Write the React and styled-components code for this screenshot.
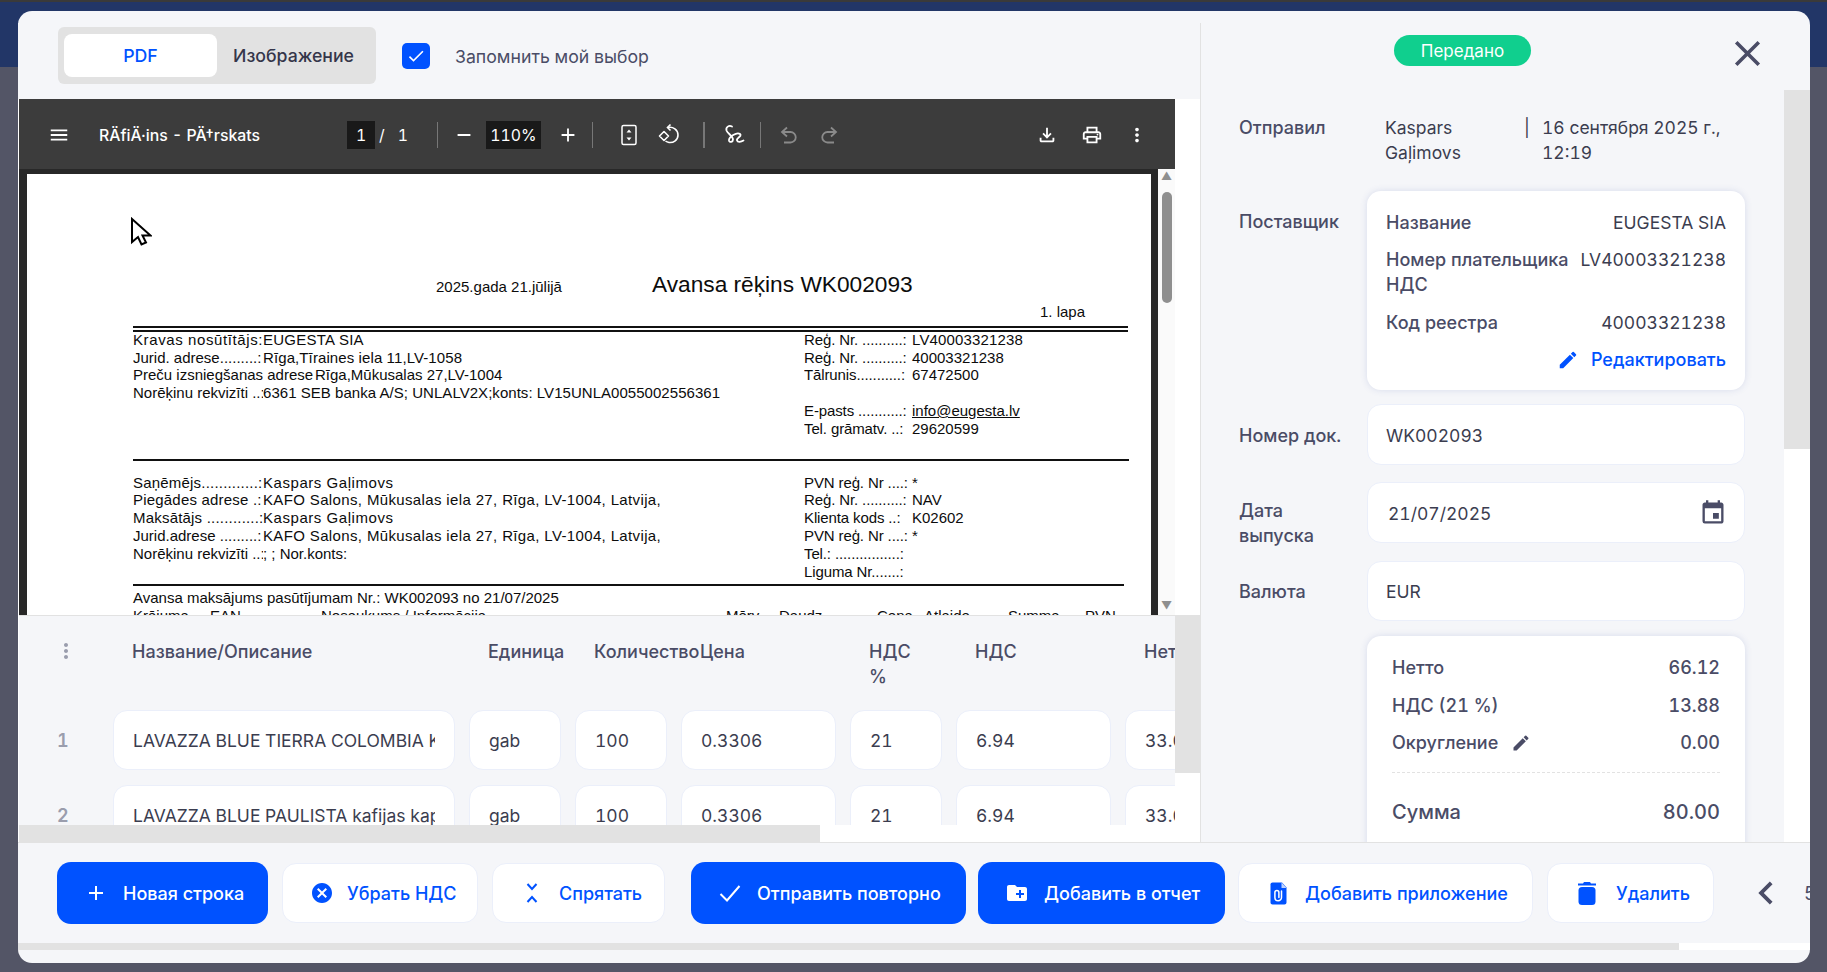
import React from "react";
import styled, { createGlobalStyle } from "styled-components";
import {
  MdAdd,
  MdCancel,
  MdChevronLeft,
  MdClose,
  MdCreateNewFolder,
  MdEdit,
  MdEvent,
  MdMenu,
  MdMoreVert,
  MdOutlineFileDownload,
  MdOutlinePrint,
  MdRemove,
  MdCheck,
} from "react-icons/md";

const blue = "#0052ff";
const ink = "#4a4c66";
const text = "#3b3d4f";
const panel = "#f5f6f9";
const bar = "#e2e2e2";
const font = `"Inter", "Noto Sans", sans-serif`;

const GlobalStyle = createGlobalStyle`
  html, body { margin: 0; padding: 0; background: #535566; }
  * { box-sizing: border-box; }
`;

const FitIcon = () => (
  <svg width="24" height="24" viewBox="0 0 24 24" fill="none">
    <rect x="5" y="2.500" width="14" height="19" rx="1.500" stroke="#fff" strokeWidth="1.500" />
    <path d="M12 6.500l2.500 3h-5zM12 17.500l-2.500-3h5z" fill="#fff" />
  </svg>
);

const RotateIcon = () => (
  <svg width="24" height="24" viewBox="0 0 24 24" fill="none" stroke="#fff" strokeWidth="1.600">
    <path d="M7 8.500l4.500 4.500L7 17.500 2.500 13z" strokeLinejoin="round" />
    <path d="M11 4.500c5-1 10 2 10 7.500 0 5-4.500 8-9 7.500-1.400-.2-2.500-.7-3.500-1.500" />
    <path d="M13.500 1.500L10.500 4.500l3 3" />
  </svg>
);

const InkIcon = () => (
  <svg width="24" height="24" viewBox="0 0 24 24" fill="none" stroke="#fff" strokeWidth="1.800" strokeLinecap="round">
    <path d="M11 3.500C8 2 4.500 4 5.500 7.500c1 3 6.500 5.500 6.500 9 0 2.500-3.500 3.500-4 1-.5-3.500 8-9 11-6.500 2.500 2.500-4 3.500-3 6.500.7 2 4 1.500 6.500 0" />
  </svg>
);

const UndoIcon = ({ flip }) => (
  <svg width="24" height="24" viewBox="0 0 24 24" fill="none" stroke="#8a8a8a" strokeWidth="1.800" style={flip ? { transform: "scaleX(-1)" } : undefined}>
    <path d="M10 4.500L5 9l5 4.500" />
    <path d="M5.500 9h8a5 5 0 0 1 0 10.500H7" />
  </svg>
);

const AttachIcon = () => (
  <svg width="24" height="24" viewBox="0 0 24 24">
    <path d="M4.500 3.500c0-1.100.9-2 2-2h9.500l4.500 5v15c0 1.100-.9 2-2 2h-12c-1.100 0-2-.9-2-2z" fill={blue} />
    <path d="M15.500 1.500l5 5.500h-5z" fill="#fff" opacity=".75" />
    <path d="M15.500 10v6.500a3.300 3.300 0 0 1-6.600 0v-5a2 2 0 0 1 4 0v5" fill="none" stroke="#fff" strokeWidth="1.500" strokeLinecap="round" />
  </svg>
);

const TrashIcon = () => (
  <svg width="24" height="24" viewBox="0 0 24 24" fill={blue}>
    <path d="M3 2.500h5l1-1.500h6l1 1.500h5v2H3z" />
    <rect x="3.500" y="6" width="17" height="18" rx="3.500" />
  </svg>
);

const CheckIcon = () => (
  <svg width="24" height="24" viewBox="0 0 24 24" fill="none" stroke="#fff" strokeWidth="2">
    <path d="M2.500 13l6.500 6.500L21.500 5" />
  </svg>
);

const CursorIcon = () => (
  <svg width="22" height="30" viewBox="0 0 22 30">
    <path
      d="M2 2v23l6-5 3.500 7.500 4.500-2-3.500-7h8z"
      fill="#fff"
      stroke="#000"
      strokeWidth="2"
    />
  </svg>
);

const Backdrop = styled.div`
  position: relative;
  width: 1827px;
  height: 972px;
  overflow: hidden;
  background: #535566;
  font-family: ${font};
  font-variant-numeric: tabular-nums;
`;

const AppHeader = styled.div`
  height: 67px;
  background: #223667;
  border-top: 2px solid #3a3a3a;
`;

const Modal = styled.div`
  position: absolute;
  left: 18px;
  top: 11px;
  width: 1792px;
  height: 952px;
  display: flex;
  flex-direction: column;
  background: ${panel};
  border-radius: 14px;
  overflow: hidden;
`;

const Main = styled.div`
  height: 831px;
  display: flex;
`;

const LeftPane = styled.div`
  width: 1183px;
  margin-top: 12px;
  padding-left: 1px;
  display: flex;
  flex-direction: column;
  background: #fff;
  border-right: 1px solid ${bar};
`;

const ChoiceRow = styled.div`
  height: 76px;
  margin-left: -1px;
  padding: 4px 0 0 40px;
  display: flex;
  align-items: flex-start;
  background: ${panel};
`;

const Toggle = styled.div`
  width: 318px;
  height: 57px;
  padding: 7px 6px;
  display: flex;
  background: ${bar};
  border-radius: 6px;
`;

const ToggleItem = styled.div`
  width: ${(p) => (p.$active ? "153px" : "auto")};
  padding-left: ${(p) => (p.$active ? "0" : "16px")};
  display: flex;
  align-items: center;
  justify-content: ${(p) => (p.$active ? "center" : "flex-start")};
  background: ${(p) => (p.$active ? "#fff" : "transparent")};
  color: ${(p) => (p.$active ? blue : "#35364a")};
  border-radius: 8px;
  font-size: 17.700px;
  font-weight: 500;
`;

const Remember = styled.label`
  height: 57px;
  margin-left: 26px;
  padding-top: 2px;
  display: flex;
  align-items: center;
  gap: 25px;
  color: ${ink};
  font-size: 17.700px;
`;

const CheckBox = styled.span`
  width: 28px;
  height: 26px;
  margin-top: -2px;
  display: flex;
  align-items: center;
  justify-content: center;
  background: ${blue};
  border-radius: 5px;
  color: #fff;
  font-size: 20px;
`;

const Viewer = styled.div`
  width: 1156px;
  height: 516px;
  flex: none;
  display: flex;
  flex-direction: column;
  background: #282828;
`;

const PdfBar = styled.div`
  height: 70px;
  flex: none;
  padding-top: 2px;
  display: flex;
  align-items: center;
  background: #3c3c3c;
  color: #fff;
  font-size: 15.800px;
  font-weight: 500;
`;

const Tool = styled.span`
  width: 24px;
  height: 24px;
  flex: none;
  margin-left: ${(p) => p.$ml}px;
  display: flex;
  align-items: center;
  justify-content: center;
  color: #fff;
  font-size: 22px;
`;

const DocTitle = styled.span`
  width: 200px;
  margin-left: 28px;
  white-space: nowrap;
`;

const NumBox = styled.span`
  width: ${(p) => p.$w}px;
  height: 28px;
  flex: none;
  margin-left: ${(p) => p.$ml}px;
  display: flex;
  align-items: center;
  justify-content: center;
  background: #191919;
  font-weight: 400;
`;

const PageTotal = styled.span`
  margin-left: ${(p) => p.$ml}px;
  font-weight: 400;
`;

const BarSep = styled.span`
  width: ${(p) => (p.$thick ? 2 : 1)}px;
  height: 26px;
  flex: none;
  margin-left: ${(p) => p.$ml}px;
  background: #777;
`;

const PdfBody = styled.div`
  height: 446px;
  padding: 5px 0 0 8px;
  display: flex;
  overflow: hidden;
`;

const Sheet = styled.div`
  position: relative;
  width: 1124px;
  height: 500px;
  flex: none;
  padding: 98px 0 0 106px;
  background: #fff;
  color: #0c0c0c;
  font-family: "Liberation Sans", Arial, sans-serif;
  font-size: 15px;
  line-height: 17.800px;
`;

const SheetScroll = styled.div`
  width: 17px;
  height: 446px;
  flex: none;
  margin-top: -5px;
  margin-left: 7px;
  display: flex;
  flex-direction: column;
  align-items: center;
  background: #fafafa;
  color: #8f8f8f;
  font-size: 11px;
  line-height: 14px;
`;

const ScrollThumb = styled.div`
  width: 10px;
  height: 111px;
  margin-top: 9px;
  background: #8f8f8f;
  border-radius: 5px;
`;

const ScrollArrowDown = styled.div`
  margin-top: auto;
  padding-bottom: 3px;
`;

const Cursor = styled.span`
  position: absolute;
  left: 103px;
  top: 43px;
  line-height: 0;
`;

const TitleRow = styled.div`
  height: 24px;
  display: flex;
  align-items: baseline;
`;

const SheetDate = styled.span`
  width: 519px;
  padding-left: 303px;
  white-space: nowrap;
`;

const SheetTitle = styled.span`
  font-size: 22.700px;
  line-height: 24px;
  white-space: nowrap;
`;

const PageNo = styled.div`
  margin: 7px 0 0 907px;
`;

const DoubleRule = styled.div`
  width: 995px;
  height: 6px;
  margin-top: 5px;
  border-top: 2px solid #111;
  border-bottom: 2px solid #111;
`;

const Rule = styled.div`
  width: ${(p) => p.$w}px;
  height: 2px;
  margin-top: ${(p) => p.$mt}px;
  background: #111;
`;

const Columns = styled.div`
  margin-top: ${(p) => p.$mt}px;
  display: grid;
  grid-template-columns: 671px auto;
`;

const Line = styled.div`
  height: 17.800px;
  display: flex;
  white-space: nowrap;
`;

const LineLabel = styled.span`
  width: ${(p) => p.$w}px;
  flex: none;
  overflow: hidden;
  letter-spacing: ${(p) => p.$ls || 0}px;
`;

const LineValue = styled.span`
  letter-spacing: ${(p) => p.$ls || 0}px;
`;

const Mail = styled.span`
  text-decoration: underline;
`;

const OrderLine = styled.div`
  height: 17.800px;
  margin-top: 3px;
  white-space: nowrap;
`;

const SheetHead = styled.div`
  height: 17.800px;
  display: grid;
  grid-template-columns: 77px 111px 405px 53px 98px 47px 84px 77px auto;
  white-space: nowrap;
`;

const TableZone = styled.div`
  height: 227px;
  flex: none;
  display: flex;
  border-top: 1px solid ${bar};
`;

const TableCol = styled.div`
  width: 1156px;
  display: flex;
  flex-direction: column;
`;

const TableScroll = styled.div`
  height: 209px;
  padding-top: 23px;
  overflow: hidden;
  background: ${panel};
`;

const Grid = styled.div`
  width: 1300px;
  margin-bottom: ${(p) => p.$mb}px;
  display: grid;
  grid-template-columns: 80px 342px 92px 92px 155px 92px 155px 155px;
  column-gap: 14px;
`;

const HeadCell = styled.div`
  padding-left: 19px;
  color: ${ink};
  font-size: 18px;
  font-weight: 500;
  line-height: 25px;
  white-space: nowrap;
`;

const Dots = styled.div`
  padding-left: 35px;
  color: #9a9dad;
  font-size: 24px;
  line-height: 25px;
`;

const RowNo = styled.div`
  padding-left: 38px;
  align-self: center;
  color: #9a9dad;
  font-size: 18px;
  font-weight: 600;
`;

const Cell = styled.div`
  height: 60px;
  padding: 0 19px;
  display: flex;
  align-items: center;
  background: #fff;
  border: 1px solid #ebeffa;
  border-radius: 14px;
  color: ${text};
  font-size: 17.500px;
`;

const CellText = styled.span`
  overflow: hidden;
  white-space: nowrap;
`;

const HBar = styled.div`
  height: 17px;
  background: #fff;
`;

const HThumb = styled.div`
  width: ${(p) => p.$w}px;
  height: 100%;
  background: ${bar};
`;

const VBar = styled.div`
  width: 25px;
  background: #fff;
`;

const VThumb = styled.div`
  height: ${(p) => p.$h}px;
  background: ${bar};
`;

const RightPane = styled.div`
  width: 609px;
  display: flex;
  flex-direction: column;
`;

const StatusRow = styled.div`
  height: 79px;
  flex: none;
  padding: 24px 41px 0 193px;
  display: flex;
  align-items: flex-start;
  justify-content: space-between;
`;

const Badge = styled.span`
  width: 137px;
  height: 31px;
  display: flex;
  align-items: center;
  justify-content: center;
  background: #10cf8e;
  border-radius: 16px;
  color: #fff;
  font-size: 17px;
`;

const CloseBtn = styled.span`
  margin-top: -3px;
  color: ${ink};
  font-size: 43px;
  line-height: 0;
  & svg {
    display: block;
  }
`;

const RightBody = styled.div`
  height: 752px;
  display: flex;
  overflow: hidden;
`;

const Details = styled.div`
  width: 583px;
  padding: 25px 39px 0 38px;
  background: ${panel};
`;

const Row = styled.div`
  margin-top: ${(p) => p.$mt || 0}px;
  display: grid;
  grid-template-columns: 128px 378px;
  align-items: ${(p) => (p.$top ? "start" : "center")};
`;

const RowLabel = styled.div`
  padding-top: ${(p) => p.$pt || 0}px;
  margin-bottom: ${(p) => p.$mb || 0}px;
  color: ${ink};
  font-size: 18px;
  font-weight: 500;
  line-height: 25px;
`;

const Sender = styled.div`
  padding-left: 18px;
  display: grid;
  grid-template-columns: 139px 18px auto;
  color: ${text};
  font-size: 17.500px;
  line-height: 25px;
`;

const Card = styled.div`
  padding: ${(p) => p.$pad};
  background: #fff;
  border-radius: 14px;
  box-shadow: 0 0 7px rgba(70, 90, 170, 0.16);
`;

const CardRow = styled.div`
  margin-top: ${(p) => p.$mt || 0}px;
  display: flex;
  justify-content: space-between;
  align-items: flex-start;
  color: ${text};
  font-size: 17.500px;
  line-height: 25px;
`;

const CardKey = styled.span`
  max-width: 190px;
  color: ${ink};
  font-size: 18px;
  font-weight: 500;
`;

const EditLink = styled.div`
  margin-top: 12px;
  display: flex;
  justify-content: flex-end;
  align-items: center;
  gap: 12px;
  color: ${blue};
  font-size: 18px;
  font-weight: 500;
  line-height: 25px;
`;

const Field = styled.div`
  height: ${(p) => p.$h}px;
  padding: 1px ${(p) => p.$pl || 18}px 0;
  display: flex;
  align-items: center;
  justify-content: space-between;
  background: #fff;
  border: 1px solid #ebeffa;
  border-radius: 14px;
  color: ${text};
  font-size: 17.500px;
`;

const CalendarIcon = styled.span`
  margin-right: -3px;
  color: ${ink};
  font-size: 28px;
  line-height: 0;
`;

const TotalRow = styled.div`
  height: ${(p) => p.$h || 38}px;
  display: flex;
  align-items: center;
  justify-content: space-between;
  color: ${ink};
  font-size: 18px;
  font-weight: 500;
`;

const TotalKey = styled.span`
  display: flex;
  align-items: center;
  gap: 13px;
`;

const Dashed = styled.div`
  margin-top: 11px;
  border-top: 1px dashed ${bar};
`;

const SumRow = styled.div`
  height: 30px;
  margin-top: 24px;
  margin-bottom: 70px;
  display: flex;
  align-items: center;
  justify-content: space-between;
  color: ${ink};
  font-size: 20px;
  font-weight: 500;
`;

const RightTrack = styled.div`
  width: 26px;
  background: #fff;
`;

const Footer = styled.div`
  height: 121px;
  border-top: 1px solid ${bar};
  overflow: hidden;
`;

const Buttons = styled.div`
  height: 62px;
  margin-top: 19px;
  padding-left: 39px;
  display: flex;
  align-items: center;
  white-space: nowrap;
`;

const Btn = styled.button`
  width: ${(p) => p.$w}px;
  height: ${(p) => (p.$primary ? 62 : 60)}px;
  flex: none;
  margin-left: ${(p) => p.$ml || 0}px;
  padding: 0 0 0 27px;
  display: flex;
  align-items: center;
  gap: ${(p) => p.$gap || 15}px;
  background: ${(p) => (p.$primary ? blue : "#fff")};
  border: ${(p) => (p.$primary ? "none" : "1px solid #ebeffa")};
  border-radius: 14px;
  color: ${(p) => (p.$primary ? "#fff" : blue)};
  font-family: ${font};
  font-size: 18px;
  font-weight: 500;
`;

const BtnIcon = styled.span`
  width: 24px;
  height: 24px;
  flex: none;
  display: flex;
  align-items: center;
  justify-content: center;
  font-size: ${(p) => p.$size || 24}px;
`;

const Pager = styled.span`
  margin-left: 29px;
  display: flex;
  align-items: center;
  color: ${ink};
  font-size: 46px;
`;

const PagerNo = styled.span`
  margin-left: 15px;
  color: ${ink};
  font-size: 18px;
`;

const FooterBar = styled.div`
  height: 7px;
  margin-top: 19px;
  background: #fff;
`;

const leftTop = [
  ["Kravas nosūtītājs:", "EUGESTA SIA", 130, 0.6, 0.25],
  ["Jurid. adrese.........:", "Rīga,Tīraines iela 11,LV-1058", 130, 0, 0.1],
  ["Preču izsniegšanas adrese", "Rīga,Mūkusalas 27,LV-1004", 182],
  ["Norēķinu rekvizīti ..:", "6361 SEB banka A/S; UNLALV2X;konts: LV15UNLA0055002556361", 130, 0, 0.04],
];

const rightTop = [
  ["Reģ. Nr. ..........:", "LV40003321238", 108, -0.12, 0.15],
  ["Reģ. Nr. ..........:", "40003321238", 108, -0.12],
  ["Tālrunis...........:", "67472500", 108, -0.12],
  ["", "", 108],
  ["E-pasts ...........:", <Mail key="m">info@eugesta.lv</Mail>, 108, -0.12],
  ["Tel. grāmatv. ..:", "29620599", 108, -0.12],
];

const leftBottom = [
  ["Saņēmējs.............:", "Kaspars Gaļimovs", 130, 0.2, 0.55],
  ["Piegādes adrese .:", "KAFO Salons, Mūkusalas iela 27, Rīga, LV-1004, Latvija,", 130, 0.2, 0.36],
  ["Maksātājs ............:", "Kaspars Gaļimovs", 130, 0.2, 0.55],
  ["Jurid.adrese .........:", "KAFO Salons, Mūkusalas iela 27, Rīga, LV-1004, Latvija,", 130, 0, 0.36],
  ["Norēķinu rekvizīti ..:", "; ; Nor.konts:", 130],
];

const rightBottom = [
  ["PVN reģ. Nr ....:", "*", 108, -0.12],
  ["Reģ. Nr. ..........:", "NAV", 108, -0.12],
  ["Klienta kods ..:", "K02602", 108, -0.12],
  ["PVN reģ. Nr ....:", "*", 108, -0.12],
  ["Tel.: ................:", "", 108, -0.12],
  ["Liguma Nr.......:", "", 108, -0.12],
];

const rows = [
  ["1", "LAVAZZA BLUE TIERRA COLOMBIA KAFIJAS KAPSULAS"],
  ["2", "LAVAZZA BLUE PAULISTA kafijas kapsulas"],
];

const Lines = ({ items }) => (
  <div>
    {items.map(([label, value, width, labelSpacing, valueSpacing], i) => (
      <Line key={i}>
        <LineLabel $w={width} $ls={labelSpacing}>{label}</LineLabel>
        <LineValue $ls={valueSpacing}>{value}</LineValue>
      </Line>
    ))}
  </div>
);

const App = () => {
  return (
    <>
      <GlobalStyle />
      <Backdrop>
        <AppHeader />
        <Modal>
          <Main>
            <LeftPane>
              <ChoiceRow>
                <Toggle>
                  <ToggleItem $active>PDF</ToggleItem>
                  <ToggleItem>Изображение</ToggleItem>
                </Toggle>
                <Remember>
                  <CheckBox>
                    <MdCheck />
                  </CheckBox>
                  Запомнить мой выбор
                </Remember>
              </ChoiceRow>
              <Viewer>
                <PdfBar>
                  <Tool $ml={28}><MdMenu /></Tool>
                  <DocTitle>RÄfiÄ·ins - PÄ†rskats</DocTitle>
                  <NumBox $w={28} $ml={48}>1</NumBox>
                  <PageTotal $ml={4}>/</PageTotal>
                  <PageTotal $ml={13}>1</PageTotal>
                  <BarSep $ml={29} />
                  <Tool $ml={14}><MdRemove /></Tool>
                  <NumBox $w={55} $ml={10}>110%</NumBox>
                  <Tool $ml={15}><MdAdd /></Tool>
                  <BarSep $ml={12} />
                  <Tool $ml={24}><FitIcon /></Tool>
                  <Tool $ml={16}><RotateIcon /></Tool>
                  <BarSep $thick $ml={22} />
                  <Tool $ml={16}><InkIcon /></Tool>
                  <BarSep $ml={15} />
                  <Tool $ml={16}><UndoIcon /></Tool>
                  <Tool $ml={16}><UndoIcon flip /></Tool>
                  <Tool $ml={194}><MdOutlineFileDownload /></Tool>
                  <Tool $ml={21}><MdOutlinePrint /></Tool>
                  <Tool $ml={21}><MdMoreVert /></Tool>
                </PdfBar>
                <PdfBody>
                  <Sheet>
                    <Cursor><CursorIcon /></Cursor>
                    <TitleRow>
                      <SheetDate>2025.gada 21.jūlijā</SheetDate>
                      <SheetTitle>Avansa rēķins WK002093</SheetTitle>
                    </TitleRow>
                    <PageNo>1. lapa</PageNo>
                    <DoubleRule />
                    <Columns $mt={-1}>
                      <Lines items={leftTop} />
                      <Lines items={rightTop} />
                    </Columns>
                    <Rule $w={996} $mt={21} />
                    <Columns $mt={13}>
                      <Lines items={leftBottom} />
                      <Lines items={rightBottom} />
                    </Columns>
                    <Rule $w={991} $mt={4} />
                    <OrderLine>Avansa maksājums pasūtījumam Nr.: WK002093 no 21/07/2025</OrderLine>
                    <SheetHead>
                      <span>Krājuma-</span>
                      <span>EAN</span>
                      <span>Nosaukums / Informācija</span>
                      <span>Mērv.</span>
                      <span>Daudz.</span>
                      <span>Cena</span>
                      <span>Atlaide</span>
                      <span>Summa</span>
                      <span>PVN</span>
                    </SheetHead>
                  </Sheet>
                  <SheetScroll>
                    <span>▲</span>
                    <ScrollThumb />
                    <ScrollArrowDown>▼</ScrollArrowDown>
                  </SheetScroll>
                </PdfBody>
              </Viewer>
              <TableZone>
                <TableCol>
                  <TableScroll>
                    <Grid $mb={21}>
                      <Dots><MdMoreVert /></Dots>
                      <HeadCell>Название/Описание</HeadCell>
                      <HeadCell>Единица</HeadCell>
                      <HeadCell>Количество</HeadCell>
                      <HeadCell>Цена</HeadCell>
                      <HeadCell>НДС<br />%</HeadCell>
                      <HeadCell>НДС</HeadCell>
                      <HeadCell>Нетто</HeadCell>
                    </Grid>
                    {rows.map(([no, name]) => (
                      <Grid key={no} $mb={15}>
                        <RowNo>{no}</RowNo>
                        <Cell><CellText>{name}</CellText></Cell>
                        <Cell><CellText>gab</CellText></Cell>
                        <Cell><CellText>100</CellText></Cell>
                        <Cell><CellText>0.3306</CellText></Cell>
                        <Cell><CellText>21</CellText></Cell>
                        <Cell><CellText>6.94</CellText></Cell>
                        <Cell><CellText>33.06</CellText></Cell>
                      </Grid>
                    ))}
                  </TableScroll>
                  <HBar><HThumb $w={801} /></HBar>
                </TableCol>
                <VBar><VThumb $h={157} /></VBar>
              </TableZone>
            </LeftPane>
            <RightPane>
              <StatusRow>
                <Badge>Передано</Badge>
                <CloseBtn><MdClose /></CloseBtn>
              </StatusRow>
              <RightBody>
                <Details>
                  <Row $top>
                    <RowLabel>Отправил</RowLabel>
                    <Sender>
                      <span>Kaspars Gaļimovs</span>
                      <span>|</span>
                      <span>16 сентября 2025 г., 12:19</span>
                    </Sender>
                  </Row>
                  <Row $top $mt={26}>
                    <RowLabel $pt={18}>Поставщик</RowLabel>
                    <Card $pad="19px 19px 18px">
                      <CardRow>
                        <CardKey>Название</CardKey>
                        EUGESTA SIA
                      </CardRow>
                      <CardRow $mt={12}>
                        <CardKey>Номер плательщика НДС</CardKey>
                        LV40003321238
                      </CardRow>
                      <CardRow $mt={13}>
                        <CardKey>Код реестра</CardKey>
                        40003321238
                      </CardRow>
                      <EditLink><MdEdit size={22} />Редактировать</EditLink>
                    </Card>
                  </Row>
                  <Row $mt={14}>
                    <RowLabel $pt={2}>Номер док.</RowLabel>
                    <Field $h={61}>WK002093</Field>
                  </Row>
                  <Row $mt={17} $top>
                    <RowLabel $pt={16} $mb={-5}>Дата<br />выпуска</RowLabel>
                    <Field $h={61} $pl={20}>
                      21/07/2025
                      <CalendarIcon><MdEvent /></CalendarIcon>
                    </Field>
                  </Row>
                  <Row $mt={18}>
                    <RowLabel>Валюта</RowLabel>
                    <Field $h={60}>EUR</Field>
                  </Row>
                  <Row $mt={15} $top>
                    <span />
                    <Card $pad="12px 25px 0">
                      <TotalRow>
                        Нетто<span>66.12</span>
                      </TotalRow>
                      <TotalRow>
                        НДС (21 %)<span>13.88</span>
                      </TotalRow>
                      <TotalRow $h={37}>
                        <TotalKey>Округление<MdEdit size={20} /></TotalKey>
                        <span>0.00</span>
                      </TotalRow>
                      <Dashed />
                      <SumRow>
                        Сумма<span>80.00</span>
                      </SumRow>
                    </Card>
                  </Row>
                </Details>
                <RightTrack><VThumb $h={359} /></RightTrack>
              </RightBody>
            </RightPane>
          </Main>
          <Footer>
            <Buttons>
              <Btn $primary $w={211}><BtnIcon $size={28}><MdAdd /></BtnIcon>Новая строка</Btn>
              <Btn $w={196} $ml={14} $gap={13}><BtnIcon $size={28}><MdCancel /></BtnIcon>Убрать НДС</Btn>
              <Btn $w={173} $ml={14}>
                <BtnIcon $size={24}>
                  <svg width="24" height="24" viewBox="0 0 24 24" fill="none" stroke={blue} strokeWidth="2">
                    <path d="M7.500 3l4.500 5 4.500-5M7.500 21l4.500-5 4.500 5" />
                  </svg>
                </BtnIcon>
                Спрятать
              </Btn>
              <Btn $primary $w={275} $ml={26}><BtnIcon><CheckIcon /></BtnIcon>Отправить повторно</Btn>
              <Btn $primary $w={247} $ml={12}><BtnIcon $size={28}><MdCreateNewFolder /></BtnIcon>Добавить в отчет</Btn>
              <Btn $w={295} $ml={13}><BtnIcon><AttachIcon /></BtnIcon>Добавить приложение</Btn>
              <Btn $w={167} $ml={14} $gap={17}><BtnIcon><TrashIcon /></BtnIcon>Удалить</Btn>
              <Pager><MdChevronLeft /><PagerNo>5</PagerNo></Pager>
            </Buttons>
            <FooterBar><HThumb $w={1661} /></FooterBar>
          </Footer>
        </Modal>
      </Backdrop>
    </>
  );
};

export default App;
